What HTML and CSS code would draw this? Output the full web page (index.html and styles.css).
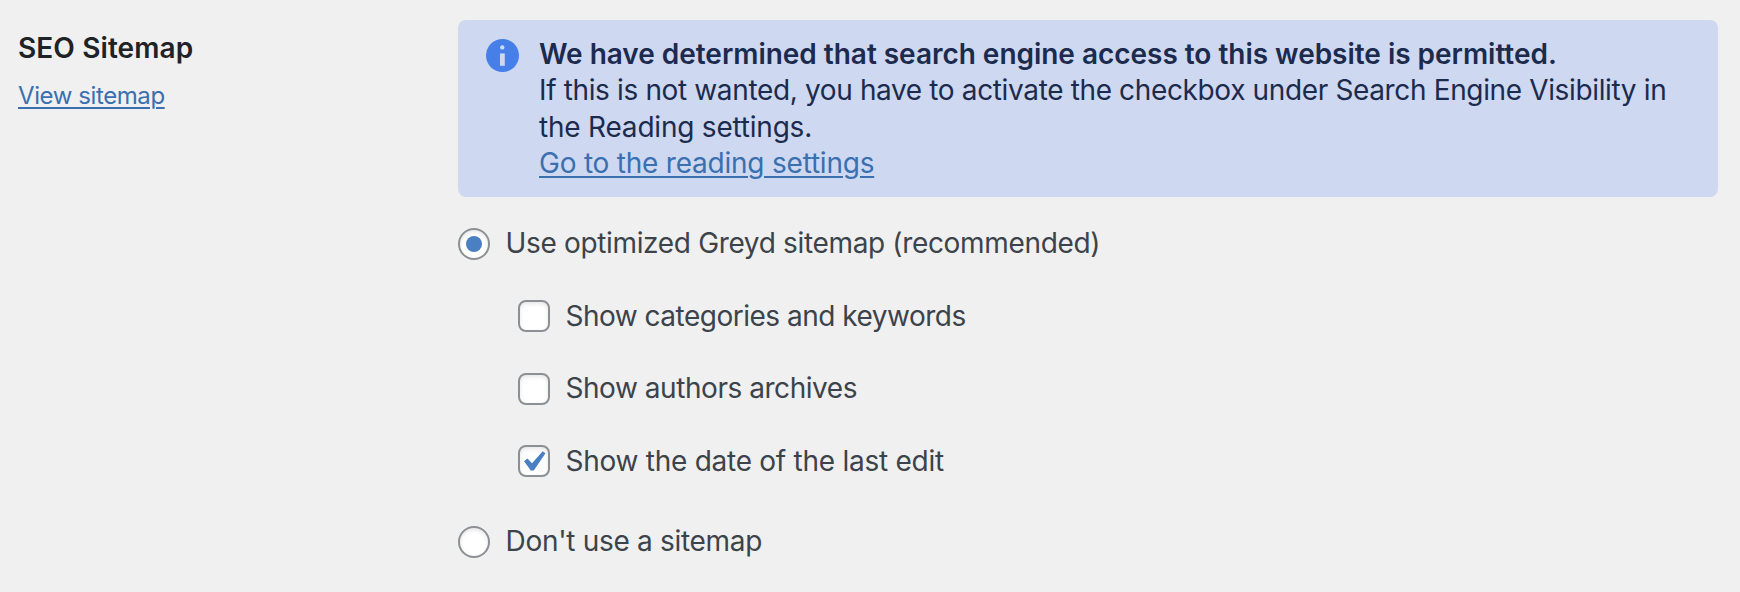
FILE: index.html
```
<!DOCTYPE html>
<html lang="en">
<head>
<meta charset="utf-8">
<title>SEO Sitemap</title>
<link rel="stylesheet" href="styles.css">
</head>
<body>
<main class="setting">
  <header class="heading">
    <h2 class="title">SEO Sitemap</h2>
    <a class="view-link" href="#">View sitemap</a>
  </header>
  <section class="content">
    <div class="notice">
      <svg class="info" viewBox="0 0 33 33" aria-hidden="true">
        <circle cx="16.5" cy="16.5" r="16.5" fill="#477fe8"/>
        <circle cx="16.3" cy="8.4" r="2.2" fill="#ced8f0"/>
        <path d="M14 14.4h4.8v12.4H14z" fill="#ced8f0"/>
      </svg>
      <div class="message">
        <strong class="lead">We have determined that search engine access to this website is permitted.</strong>
        <span class="detail">If this is not wanted, you have to activate the checkbox under Search Engine Visibility in</span>
        <span class="detail-end">the Reading settings.</span>
        <a class="reading-link" href="#">Go to the reading settings</a>
      </div>
    </div>
    <div class="options">
      <label class="option"><input class="control radio" type="radio" name="sitemap" checked><span class="t-use">Use optimized Greyd sitemap (recommended)</span></label>
      <div class="suboptions">
        <label class="option"><input class="control checkbox" type="checkbox"><span class="t-cat">Show categories and keywords</span></label>
        <label class="option"><input class="control checkbox" type="checkbox"><span class="t-auth">Show authors archives</span></label>
        <label class="option"><span class="control checkbox checked"><svg class="check" viewBox="0 0 32 32" aria-hidden="true"><path d="M6 16.2 9.4 13.5 14 18.2 24.7 6.2 27.5 8.2 15.8 25.6H12.8Z" fill="#4a80c2"/></svg></span><span class="t-date">Show the date of the last edit</span></label>
      </div>
      <label class="option last"><input class="control radio" type="radio" name="sitemap"><span class="t-none">Don't use a sitemap</span></label>
    </div>
  </section>
</main>
</body>
</html>
```
FILE: styles.css
```
* { box-sizing: border-box; }
body {
  margin: 0;
  background: #f0f0f0;
  color: #3c434a;
  font: 28px/36.4px Inter, "Liberation Sans", sans-serif;
}
.setting {
  display: grid;
  grid-template-columns: 440px 1260px;
  padding: 20px 0 0 18px;
}
.heading { padding-top: 10px; }
.title {
  margin: 0;
  color: #1d2327;
  font-size: 28px;
  font-weight: 600;
  letter-spacing: .1px;
  line-height: 36px;
}
.view-link {
  display: block;
  width: max-content;
  margin-top: 12px;
  color: #3a6fb0;
  font-size: 24px;
  letter-spacing: -.41px;
  line-height: 36px;
  text-underline-offset: 3px;
  text-decoration-thickness: 2px;
}
.notice {
  display: flex;
  height: 177px;
  padding: 16px 28px;
  border-radius: 8px;
  background: #ced8f0;
  color: #1c2b4d;
}
.info { flex: none; width: 33px; height: 33px; margin: 3px 20px 0 0; }
.message { white-space: nowrap; }
.message > * { display: block; width: max-content; }
.lead { font-weight: 600; letter-spacing: -.03px; }
.detail { letter-spacing: -.36px; }
.detail-end { letter-spacing: -.21px; }
.reading-link {
  color: #3a6fb0;
  letter-spacing: -.22px;
  text-underline-offset: 3px;
  text-decoration-thickness: 2px;
}
.options { padding-top: 31px; }
.option { display: flex; align-items: center; gap: 15.5px; height: 32px; white-space: nowrap; }
.t-use, .t-none { margin-top: -1px; }
.t-use { letter-spacing: -.34px; }
.t-cat { letter-spacing: -.5px; }
.t-auth { letter-spacing: -.45px; }
.t-date { letter-spacing: -.26px; }
.t-none { letter-spacing: -.3px; }
.suboptions { display: grid; gap: 40.5px; padding: 40px 0 49px 60px; }
.control {
  flex: none;
  appearance: none;
  width: 32px;
  height: 32px;
  margin: 0;
  border: 2px solid #8c8f94;
  background: #fff;
  box-shadow: inset 0 2px 4px rgba(0, 0, 0, .1);
}
.checkbox { border-radius: 8px; }
.radio { display: grid; place-items: center; border-radius: 50%; }
.radio:checked::before {
  content: "";
  width: 16px;
  height: 16px;
  border-radius: 50%;
  background: #4a80c2;
}
.check { display: block; width: 32px; height: 32px; margin: -2px; }
```
